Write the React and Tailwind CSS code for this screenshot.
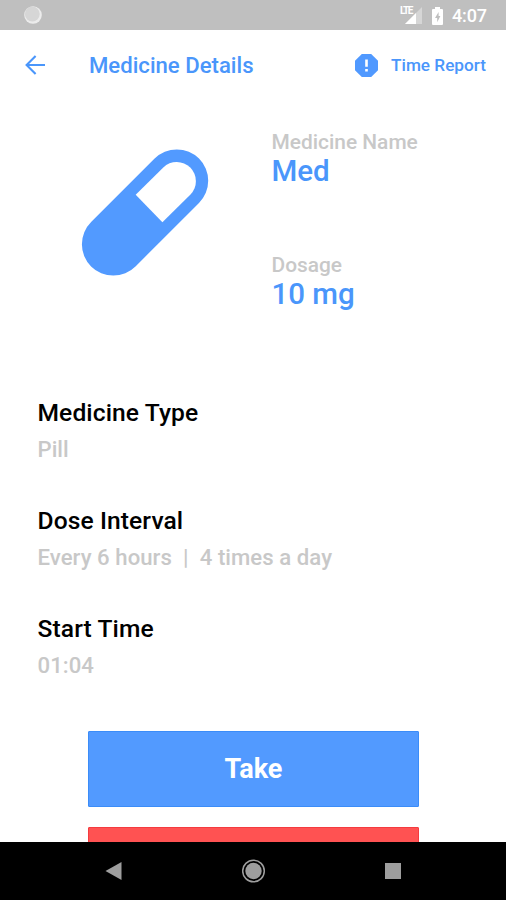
import React from 'react';

const medicine = {
  name: 'Med',
  dosage: '10 mg',
  type: 'Pill',
  interval: 'Every 6 hours  |  4 times a day',
  startTime: '01:04',
};

const StatusBar = () => (
  <div className="flex h-[30px] shrink-0 items-center justify-between bg-[#bfbfbf] pl-6 pr-[19px]">
    <svg width="18" height="18" viewBox="0 0 18 18">
      <circle cx="9" cy="9" r="8.8" fill="#ececec" />
      <circle cx="8.3" cy="8" r="7.4" fill="#d6d6d6" />
    </svg>
    <div className="flex items-center pt-px">
      <div className="relative mr-2.5">
        <svg width="17" height="17" viewBox="0 0 17 17">
          <path d="M17 0v17H0z" fill="#d6d6d6" />
          <path d="M11 6v11H0z" fill="#fff" />
        </svg>
        <span className="absolute -left-[5px] -top-[2px] text-[10px] font-bold leading-[12px] -tracking-[1.3px] text-white">LTE</span>
      </div>
      <svg width="11" height="18" viewBox="0 0 11 18" className="mr-[9px]">
        <path d="M3 0h5v2h2q1 0 1 1v14q0 1-1 1H1q-1 0-1-1V3q0-1 1-1h2z" fill="#fff" />
        <path d="M6.6 5L3 11h2.2v4.2L8.4 9H6.6z" fill="#bfbfbf" />
      </svg>
      <span className="text-[18px] font-medium leading-none -tracking-[0.1px] text-white">4:07</span>
    </div>
  </div>
);

const Header = () => (
  <div className="flex h-[70px] shrink-0 items-center justify-between pl-[25px] pr-5 text-[#4a96fb]">
    <div className="flex items-center">
      <svg width="20" height="20" viewBox="0 0 20 20" fill="none" stroke="currentColor" strokeWidth="2.1">
        <path d="M20 10H2.2M10.6 1L1.6 10l9 9" />
      </svg>
      <h1 className="ml-11 text-[22.15px] font-medium leading-none">Medicine Details</h1>
    </div>
    <div className="flex items-center">
      <svg width="23" height="23" viewBox="0 0 23 23">
        <path d="M6.8 0h9.4L23 6.8v9.4L16.2 23H6.8L0 16.2V6.8z" fill="#5099ff" />
        <path d="M10.2 5.4h2.6v7.4h-2.6zM10.2 15h2.6v2.6h-2.6z" fill="#fff" />
      </svg>
      <span className="ml-[13px] pt-0.5 text-[17.2px] font-medium leading-none">Time Report</span>
    </div>
  </div>
);

const PillIcon = () => (
  <svg width="128" height="128" viewBox="81 148 128 128">
    <path d="M113.3 244.2L176.8 180.8" stroke="#529aff" strokeWidth="62.8" strokeLinecap="round" />
    <path d="M135.7 194.7L163.3 167.4A19.2 19.2 0 0 1 190.5 194.5L162.4 222.3z" fill="#fff" />
  </svg>
);

const Summary = ({ label, value }) => (
  <div>
    <p className="text-[20.9px] font-medium leading-6 text-[#c8c8c8]">{label}</p>
    <p className="text-[29.5px] font-medium leading-[34px] text-[#4a96fb]">{value}</p>
  </div>
);

const Detail = ({ label, value }) => (
  <div>
    <p className="text-[24.6px] font-medium leading-7 tracking-[0.1px] text-black">{label}</p>
    <p className="mt-2 whitespace-pre text-[22.15px] font-medium leading-7 tracking-[0.05px] text-[#c8c8c8]">{value}</p>
  </div>
);

const NavBar = () => (
  <div className="flex h-[58px] shrink-0 items-center justify-between bg-black px-[105px]">
    <svg width="17" height="18" viewBox="0 0 17 18">
      <path d="M0.5 9L16.5 0v18z" fill="#9e9e9e" />
    </svg>
    <svg width="24" height="24" viewBox="0 0 24 24">
      <circle cx="11.5" cy="12" r="10.8" fill="none" stroke="#9e9e9e" strokeWidth="1.5" />
      <circle cx="11.5" cy="12" r="8.2" fill="#9e9e9e" />
    </svg>
    <div className="h-4 w-4 bg-[#9e9e9e]" />
  </div>
);

const App = () => {
  return (
    <div className="flex h-[900px] w-[506px] flex-col overflow-hidden bg-white font-[Roboto,sans-serif]">
      <StatusBar />
      <Header />
      <div className="flex min-h-0 flex-1 flex-col overflow-hidden">
        <div className="flex shrink-0 pl-[81px] pt-[30px]">
          <div className="pt-[18px]">
            <PillIcon />
          </div>
          <div className="ml-[62.5px] flex flex-col gap-[65px]">
            <Summary label="Medicine Name" value={medicine.name} />
            <Summary label="Dosage" value={medicine.dosage} />
          </div>
        </div>

        <div className="mt-[88px] flex shrink-0 flex-col gap-11 pl-[37.5px]">
          <Detail label="Medicine Type" value={medicine.type} />
          <Detail label="Dose Interval" value={medicine.interval} />
          <Detail label="Start Time" value={medicine.startTime} />
        </div>

        <div className="mt-[52px] flex shrink-0 flex-col gap-5 pl-[88px] pr-[87px]">
          <button className="h-[76px] rounded-[1px] border border-[#3b8cf8] bg-[#529aff] text-[27px] font-bold text-white">
            Take
          </button>
          <button className="h-[76px] rounded-[1px] border border-[#f43b3f] bg-[#ff5252]" />
        </div>
      </div>
      <NavBar />
    </div>
  );
};

export default App;
